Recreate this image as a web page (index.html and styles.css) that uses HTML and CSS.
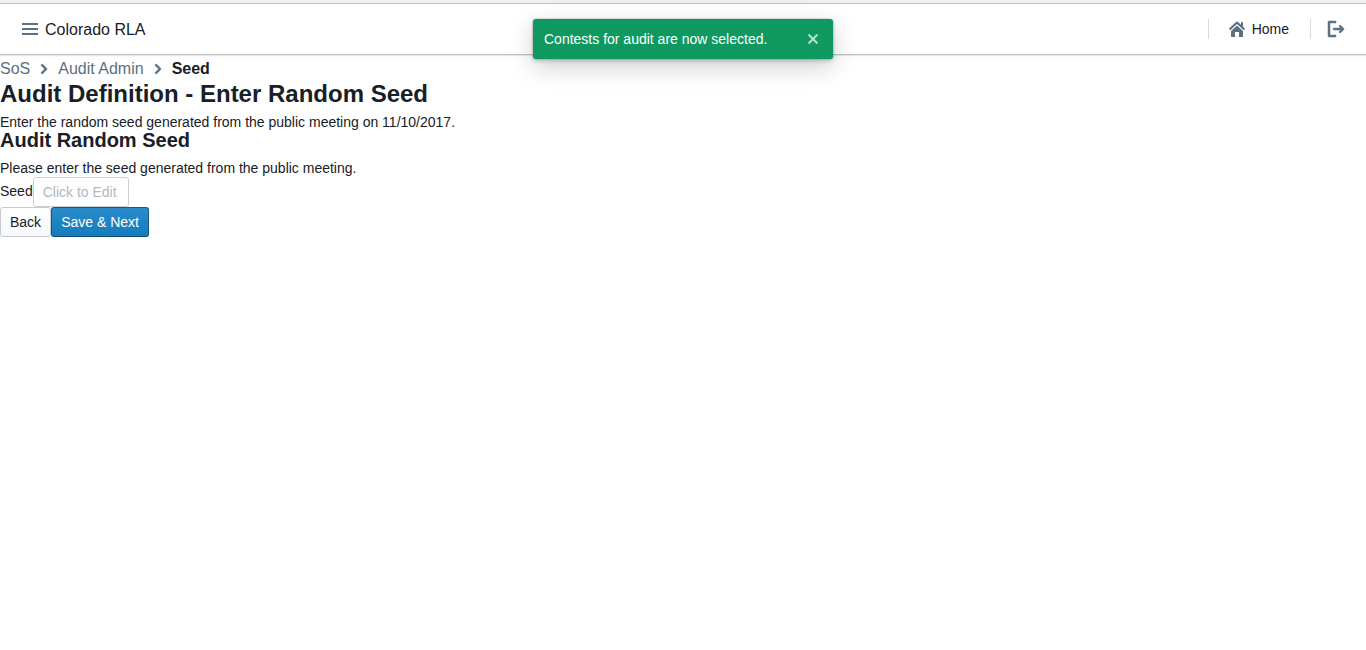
FILE: index.html
```html
<!DOCTYPE html>
<html lang="en">
<head>
<meta charset="utf-8">
<title>Colorado RLA</title>
<link rel="stylesheet" href="styles.css">
</head>
<body>
<div class="top-strip"></div>
<header class="navbar">
  <div class="nav-group">
    <button class="nav-button" type="button" aria-label="Menu">
      <svg class="icon" viewBox="0 0 16 16"><path d="M0 2h16v2H0zM0 7h16v2H0zM0 12h16v2H0z"/></svg>
    </button>
    <span class="brand">Colorado RLA</span>
  </div>
  <nav class="nav-group">
    <span class="divider"></span>
    <a class="nav-link" href="#">
      <svg class="icon" viewBox="0 0 16 16"><path d="M8 4.500L2 10v5c0 .6.4 1 1 1h3v-5h4v5h3c.6 0 1-.4 1-1v-5zM15.700 7.300L14 5.700V2c0-.6-.4-1-1-1s-1 .4-1 1v1.800L8.700.8a1 1 0 0 0-1.400 0l-7 6.500a1 1 0 0 0 1.400 1.400L8 2.900l6.300 5.800a1 1 0 0 0 1.400-1.400z"/></svg>
      Home
    </a>
    <span class="divider"></span>
    <button class="nav-button logout" type="button" aria-label="Log out">
      <svg class="icon bold" viewBox="0 0 16 16"><path d="M8 14H2V2h6V0H1C.4 0 0 .4 0 1v14c0 .6.4 1 1 1h7zM15.700 7.300l-3-3a1 1 0 0 0-1.400 1.400L12.600 7H6a1 1 0 0 0 0 2h6.600l-1.300 1.300a1 1 0 0 0 1.400 1.400l3-3a1 1 0 0 0 0-1.400z"/></svg>
    </button>
  </nav>
</header>
<main>
  <ol class="breadcrumbs">
    <li><a class="crumb" href="#">SoS</a></li>
    <li><svg class="icon bold" viewBox="0 0 16 16"><path d="M10.700 7.300l-4-4a1 1 0 0 0-1.400 1.400L8.600 8l-3.300 3.300a1 1 0 0 0 1.400 1.400l4-4a1 1 0 0 0 0-1.400z"/></svg></li>
    <li><a class="crumb" href="#">Audit Admin</a></li>
    <li><svg class="icon bold" viewBox="0 0 16 16"><path d="M10.700 7.300l-4-4a1 1 0 0 0-1.400 1.400L8.600 8l-3.300 3.300a1 1 0 0 0 1.400 1.400l4-4a1 1 0 0 0 0-1.400z"/></svg></li>
    <li class="current">Seed</li>
  </ol>
  <h2 class="page-title">Audit Definition - Enter Random Seed</h2>
  <p>Enter the random seed generated from the public meeting on 11/10/2017.</p>
  <h3 class="section-title">Audit Random Seed</h3>
  <p>Please enter the seed generated from the public meeting.</p>
  <div class="row">
    <label class="seed-label" for="seed">Seed</label>
    <input class="seed-input" id="seed" type="text" placeholder="Click to Edit">
  </div>
  <div class="row">
    <button class="button" type="button">Back</button>
    <button class="button primary" type="button">Save &amp; Next</button>
  </div>
</main>
<div class="toast" role="status">
  <span class="toast-message">Contests for audit are now selected.</span>
  <button class="toast-close" type="button" aria-label="Close">
    <svg class="icon" viewBox="0 0 16 16"><path d="M9.400 8l3.300-3.300a1 1 0 0 0-1.400-1.400L8 6.600 4.700 3.300a1 1 0 0 0-1.400 1.400L6.600 8l-3.300 3.300a1 1 0 0 0 1.400 1.400L8 9.400l3.300 3.300a1 1 0 0 0 1.400-1.400z"/></svg>
  </button>
</div>
</body>
</html>
```
FILE: styles.css
```css
* {
  box-sizing: border-box;
}

body {
  margin: 0;
  background: #fff;
  color: #182026;
  font: 14px/18px "Liberation Sans", Arial, sans-serif;
}

button,
input {
  font: inherit;
}

h2,
h3,
p,
ol {
  margin: 0;
  padding: 0;
}

.icon {
  display: block;
  flex: none;
  width: 16px;
  height: 16px;
  overflow: visible;
  fill: #5c7080;
}

.bold {
  stroke: #5c7080;
  stroke-width: 0.5;
}

.top-strip {
  height: 4px;
  background: #f0f0f0;
  border-bottom: 1px solid #bfbfbf;
}

.navbar {
  display: flex;
  justify-content: space-between;
  height: 51px;
  padding: 0 15px;
  border-bottom: 1px solid #c0c1c2;
  box-shadow: 0 1px 1px rgba(16, 22, 26, 0.1);
}

.nav-group {
  display: flex;
  align-items: center;
}

.nav-button {
  height: 30px;
  padding: 0 7px;
  border: 0;
  background: none;
}

.brand {
  padding-top: 2px;
  font-size: 16px;
}

.divider {
  width: 1px;
  height: 20px;
  background: #d8dadb;
}

.nav-link {
  display: flex;
  align-items: center;
  gap: 7px;
  padding: 0 21px 0 20px;
  color: #182026;
  text-decoration: none;
}

.logout {
  padding-left: 17px;
}

.breadcrumbs {
  display: flex;
  align-items: center;
  gap: 6px;
  height: 30px;
  padding-bottom: 2px;
  font-size: 16px;
  list-style: none;
}

.crumb {
  color: #5c7080;
  text-decoration: none;
}

.current {
  font-weight: bold;
}

.page-title,
.section-title {
  margin-bottom: 10px;
  font-size: 24px;
  line-height: 18px;
}

.section-title {
  font-size: 20px;
}

.row {
  display: flex;
}

.seed-label {
  line-height: 28px;
}

.seed-input {
  width: 96px;
  height: 30px;
  padding: 0 9px;
  border: 1px solid #cdcecf;
  border-radius: 3px;
  background: #fff;
}

.seed-input::placeholder {
  color: #aeb9c2;
}

.button {
  height: 30px;
  padding: 0 9px;
  border: 1px solid #c6cacd;
  border-radius: 3px;
  background: linear-gradient(#fff, #f5f8fa);
  color: #182026;
}

.primary {
  border-color: #15598a #15598a #10486f;
  background: linear-gradient(#2b8bc9, #137cbd);
  color: #fff;
}

.toast {
  position: absolute;
  top: 19px;
  left: 50%;
  display: flex;
  align-items: center;
  justify-content: space-between;
  width: 300px;
  height: 40px;
  padding: 0 5px 0 11px;
  border-radius: 3px;
  background: #0f9960;
  color: #fff;
  transform: translateX(-50%);
  box-shadow: 0 0 0 1px rgba(16, 22, 26, 0.1), 0 2px 4px rgba(16, 22, 26, 0.2), 0 8px 24px rgba(16, 22, 26, 0.2);
}

.toast-close {
  height: 30px;
  padding: 0 7px;
  border: 0;
  background: none;
}

.toast-close .icon {
  fill: #b7e0cf;
}
```
